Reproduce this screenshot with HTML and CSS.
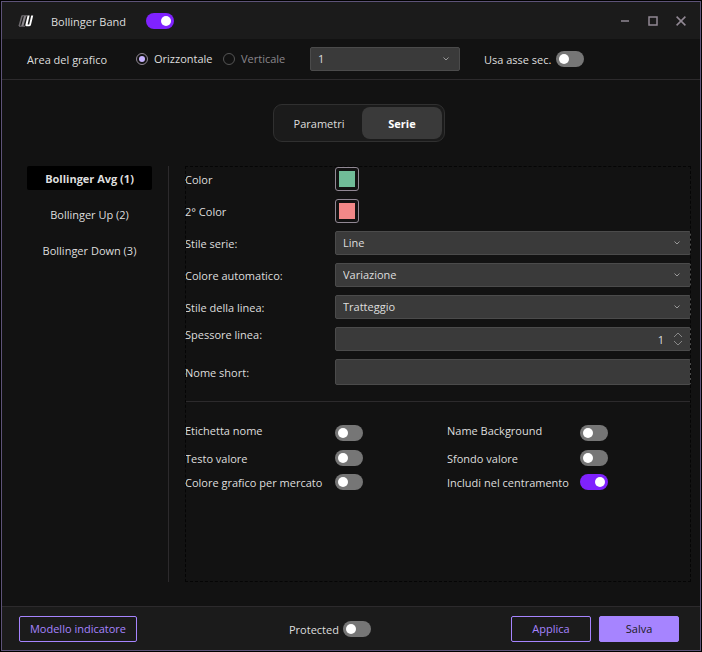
FILE: index.html
```html
<!DOCTYPE html>
<html lang="it">
  <head>
    <meta charset="UTF-8" />
    <meta name="viewport" content="width=device-width, initial-scale=1.0" />
    <title>Bollinger Band</title>
    <link rel="stylesheet" href="styles.css">
  </head>
  <body>
    <div class="window">
      <header class="titlebar">
        <svg class="logo" width="16" height="12" viewBox="0 0 16 12" aria-hidden="true">
          <path d="M3.2 1h1.6L2 11H.4z" fill="#6c696d" />
          <path d="M6 1h2.2L5.4 11H3.2z" fill="#8b878c" />
          <path d="M3.5 .8h6M1 11.2h6" stroke="#7a767b" stroke-width="1" />
          <path d="M9.6.5h2L9.6 9.4h1.6L13.2.5h2l-2.2 9.2q-.4 1.6-2 1.6H8.6q-1.6 0-1.2-1.6z" fill="#fff" />
        </svg>
        <label class="title" for="enabled">Bollinger Band</label>
        <input class="toggle" type="checkbox" id="enabled" checked />
        <div class="window-buttons">
          <button type="button" aria-label="Riduci a icona">
            <svg width="10" height="10" viewBox="0 0 10 10"><path d="M1 5h8" /></svg>
          </button>
          <button type="button" aria-label="Ingrandisci">
            <svg width="10" height="10" viewBox="0 0 10 10"><path d="M1 1h8v8H1z" /></svg>
          </button>
          <button type="button" aria-label="Chiudi">
            <svg width="10" height="10" viewBox="0 0 10 10"><path d="M.6.6l8.8 8.8M9.4.6L.6 9.4" /></svg>
          </button>
        </div>
      </header>

      <div class="toolbar">
        <span class="toolbar-title">Area del grafico</span>
        <label class="radio">
          <input type="radio" name="area" checked />
          Orizzontale
        </label>
        <label class="radio radio-off">
          <input type="radio" name="area" />
          Verticale
        </label>
        <div class="select-box toolbar-select">
          <select class="field" aria-label="Area">
            <option>1</option>
          </select>
          <svg class="chevron" width="6" height="4" viewBox="0 0 6 4"><path d="M.5.5L3 3 5.5.5" /></svg>
        </div>
        <label class="toolbar-label" for="asse">Usa asse sec.</label>
        <input class="toggle" type="checkbox" id="asse" />
      </div>

      <main class="content">
        <div class="tabs" role="tablist">
          <button class="tab" type="button" role="tab">Parametri</button>
          <button class="tab active" type="button" role="tab" aria-selected="true">Serie</button>
        </div>

        <div class="columns">
          <nav class="series">
            <button class="series-item active" type="button">Bollinger Avg (1)</button>
            <button class="series-item" type="button">Bollinger Up (2)</button>
            <button class="series-item" type="button">Bollinger Down (3)</button>
          </nav>

          <form class="panel">
            <div class="fields">
              <label for="color1">Color</label>
              <input class="swatch" type="color" id="color1" value="#70bc98" />

              <label for="color2">2° Color</label>
              <input class="swatch" type="color" id="color2" value="#f28888" />

              <label for="stile">Stile serie:</label>
              <div class="select-box">
                <select class="field" id="stile"><option>Line</option></select>
                <svg class="chevron" width="6" height="4" viewBox="0 0 6 4"><path d="M.5.5L3 3 5.5.5" /></svg>
              </div>

              <label for="automatico">Colore automatico:</label>
              <div class="select-box">
                <select class="field" id="automatico"><option>Variazione</option></select>
                <svg class="chevron" width="6" height="4" viewBox="0 0 6 4"><path d="M.5.5L3 3 5.5.5" /></svg>
              </div>

              <label for="linea">Stile della linea:</label>
              <div class="select-box">
                <select class="field" id="linea"><option>Tratteggio</option></select>
                <svg class="chevron" width="6" height="4" viewBox="0 0 6 4"><path d="M.5.5L3 3 5.5.5" /></svg>
              </div>

              <label class="label-top" for="spessore">Spessore linea:</label>
              <div class="select-box">
                <input class="field number" type="number" id="spessore" value="1" />
                <div class="spinner">
                  <button type="button" aria-label="Aumenta">
                    <svg width="10" height="6" viewBox="0 0 10 6"><path d="M1 5l4-4 4 4" /></svg>
                  </button>
                  <button type="button" aria-label="Diminuisci">
                    <svg width="10" height="6" viewBox="0 0 10 6"><path d="M1 1l4 4 4-4" /></svg>
                  </button>
                </div>
              </div>

              <label for="nome">Nome short:</label>
              <input class="field name" type="text" id="nome" />
            </div>

            <div class="options">
              <label class="label-top" for="etichetta">Etichetta nome</label>
              <input class="toggle" type="checkbox" id="etichetta" />
              <label class="label-top" for="background">Name Background</label>
              <input class="toggle" type="checkbox" id="background" />

              <label for="testo">Testo valore</label>
              <input class="toggle" type="checkbox" id="testo" />
              <label for="sfondo">Sfondo valore</label>
              <input class="toggle" type="checkbox" id="sfondo" />

              <label for="mercato">Colore grafico per mercato</label>
              <input class="toggle" type="checkbox" id="mercato" />
              <label for="centramento">Includi nel centramento</label>
              <input class="toggle" type="checkbox" id="centramento" checked />
            </div>
          </form>
        </div>
      </main>

      <footer class="footer">
        <button class="btn btn-model" type="button">Modello indicatore</button>
        <div class="protected">
          <label for="protected">Protected</label>
          <input class="toggle" type="checkbox" id="protected" />
        </div>
        <button class="btn" type="button">Applica</button>
        <button class="btn btn-primary" type="button">Salva</button>
      </footer>
    </div>
  </body>
</html>
```
FILE: styles.css
```css
:root {
  --main-font: "Open Sans", "Noto Sans", sans-serif;
  --font-size: 11px;
  --bg: #121212;
  --bar: #1b1b1b;
  --line: #2c2a2c;
  --field: #3a3a3a;
  --field-line: #4b4b4b;
  --text: #dedede;
  --muted: #8a868b;
  --accent: #a684ff;
  --toggle-on: #7f22fe;
  --toggle-off: #767676;
}

*,
*:before,
*:after {
  box-sizing: border-box;
}

body {
  margin: 0;
  padding: 1px;
  min-height: 100vh;
  display: flex;
  background-color: #000;
  color: var(--text);
  font-family: var(--main-font);
  font-size: var(--font-size);
  line-height: 16px;
}

button,
input,
select {
  margin: 0;
  font: inherit;
  color: inherit;
}

button {
  padding: 0;
  border: 0;
  background: none;
  cursor: pointer;
}

label {
  padding-top: 2px;
  white-space: nowrap;
}

svg {
  display: block;
  fill: none;
}

.window {
  flex: 1;
  display: flex;
  flex-direction: column;
  border: 1px solid #5d5378;
  background-color: var(--bg);
}

/* title bar */
.titlebar {
  display: flex;
  align-items: center;
  height: 37px;
  padding: 0 14px 0 16px;
  background-color: var(--bar);
}

.title {
  width: 95px;
  margin-left: 17px;
}

.window-buttons {
  display: flex;
  gap: 18px;
  margin-left: auto;
}

.window-buttons svg {
  stroke: #918894;
  stroke-width: 1.5;
}

/* toggle */
.toggle {
  appearance: none;
  flex: none;
  display: flex;
  align-items: center;
  width: 28px;
  height: 16px;
  padding: 0 3px;
  border-radius: 8px;
  background-color: var(--toggle-off);
  cursor: pointer;
}

.toggle:before {
  content: "";
  width: 10px;
  height: 10px;
  border-radius: 50%;
  background-color: #fff;
}

.toggle:checked {
  justify-content: flex-end;
  background-color: var(--toggle-on);
}

/* toolbar */
.toolbar {
  display: flex;
  align-items: center;
  height: 41px;
  padding: 0 25px;
  border-bottom: 1px solid var(--line);
}

.toolbar-title {
  width: 109px;
  padding-top: 2px;
}

.toolbar-select {
  width: 150px;
  margin-right: 24px;
}

.toolbar-label {
  width: 72px;
}

.radio {
  display: flex;
  align-items: center;
  gap: 6px;
  width: 87px;
  padding: 0;
}

.radio input {
  appearance: none;
  display: grid;
  place-items: center;
  width: 12px;
  height: 12px;
  border: 1px solid #918894;
  border-radius: 50%;
}

.radio input:checked:before {
  content: "";
  width: 6px;
  height: 6px;
  border-radius: 50%;
  background-color: #c8b4ff;
}

.radio-off {
  color: var(--muted);
}

.radio-off input {
  border-color: #555;
}

/* fields */
.field {
  appearance: none;
  width: 100%;
  height: 24px;
  padding: 0 7px;
  border: 1px solid var(--field-line);
  border-radius: 2px;
  background-color: var(--field);
  outline: 0;
}

.select-box {
  display: grid;
  align-items: center;
}

.select-box > * {
  grid-area: 1 / 1;
}

.chevron {
  justify-self: end;
  margin-right: 11px;
  stroke: #999;
  pointer-events: none;
}

.number {
  appearance: textfield;
  padding-right: 26px;
  text-align: right;
}

.number::-webkit-inner-spin-button {
  appearance: none;
}

.spinner {
  display: grid;
  gap: 2px;
  justify-self: end;
  margin-right: 8px;
}

.spinner svg {
  stroke: #888;
}

.name {
  height: 26px;
}

.swatch {
  appearance: none;
  width: 24px;
  height: 24px;
  padding: 3px;
  border: 1px solid #918894;
  border-radius: 3px;
  background: none;
}

.swatch::-webkit-color-swatch-wrapper {
  padding: 0;
}

.swatch::-webkit-color-swatch {
  border: 0;
  border-radius: 0;
}

/* content */
.content {
  flex: 1;
  display: flex;
  flex-direction: column;
  padding: 24px 9px 24px 25px;
}

.tabs {
  display: flex;
  align-self: center;
  padding: 2px;
  border: 1px solid #303030;
  border-radius: 9px;
  background-color: var(--bar);
}

.tab {
  width: 86px;
  height: 32px;
  padding-top: 2px;
  border-radius: 8px;
}

.tab.active {
  width: 80px;
  background-color: var(--field);
  color: #fff;
  font-weight: bold;
}

.columns {
  flex: 1;
  display: flex;
  gap: 16px;
  margin-top: 24px;
}

.series {
  display: flex;
  flex-direction: column;
  gap: 12px;
  width: 142px;
  padding-right: 16px;
  border-right: 1px solid var(--line);
}

.series-item {
  height: 24px;
  padding-top: 2px;
  border-radius: 2px;
}

.series-item.active {
  background-color: #000;
  font-weight: bold;
}

.panel {
  flex: 1;
  padding-top: 1px;
  outline: 1px dashed #050505;
  outline-offset: -1px;
}

.fields {
  display: grid;
  grid-template-columns: 150px 1fr;
  align-items: center;
  row-gap: 8px;
  padding-bottom: 16px;
  border-bottom: 1px solid var(--line);
}

.label-top {
  align-self: start;
  padding: 0 0 4px;
}

.options {
  display: grid;
  grid-template-columns: 150px 112px 133px 1fr;
  align-items: center;
  row-gap: 6px;
  padding-top: 21px;
}

/* footer */
.footer {
  display: flex;
  align-items: center;
  gap: 8px;
  height: 44px;
  padding: 0 21px 0 17px;
  border-top: 1px solid var(--line);
  background-color: var(--bar);
}

.btn {
  width: 80px;
  height: 26px;
  border: 1px solid var(--accent);
  border-radius: 2px;
  color: var(--accent);
}

.btn-model {
  width: 118px;
}

.btn-primary {
  background-color: var(--accent);
  color: #1b1b1b;
}

.protected {
  display: flex;
  align-items: center;
  gap: 4px;
  margin-left: 144px;
  margin-right: auto;
}
```
